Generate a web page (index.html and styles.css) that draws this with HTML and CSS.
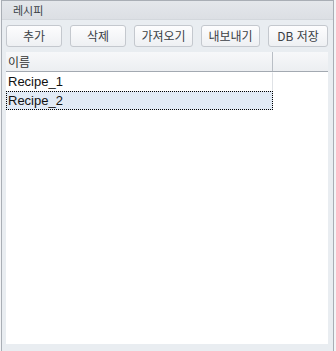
FILE: index.html
```html
<!DOCTYPE html>
<html lang="ko">
<head>
<meta charset="utf-8">
<link rel="stylesheet" href="styles.css">
</head>
<body>
<div class="panel">
  <div class="titlebar">레시피</div>
  <div class="toolbar">
    <button class="btn w56">추가</button>
    <button class="btn w56">삭제</button>
    <button class="btn w59">가져오기</button>
    <button class="btn w59">내보내기</button>
    <button class="btn w60">DB 저장</button>
  </div>
  <div class="list">
    <div class="header">
      <div class="col1">이름</div>
      <div class="col2"></div>
    </div>
    <div class="row"><span class="cell">Recipe_1</span></div>
    <div class="row selected"><span class="cell">Recipe_2</span></div>
  </div>
</div>
</body>
</html>
```

FILE: styles.css
```css
html, body {
  margin: 0;
  padding: 0;
  background: #f3f4f6;
  width: 336px;
  height: 351px;
  overflow: hidden;
}
.panel {
  margin-left: 1px;
  width: 331px;
  height: 351px;
  border: 1px solid #a9aeb5;
  border-bottom: none;
  background: #e9edf1;
  display: flex;
  flex-direction: column;
  font-family: "Noto Sans CJK KR", "Liberation Sans", sans-serif;
}
.titlebar {
  height: 18px;
  line-height: 18px;
  padding-left: 11px;
  font-size: 11px;
  color: #3a3f46;
  background: linear-gradient(#e4e7eb, #dcdfe4);
  border-bottom: 1px solid #d3d7dc;
}
.toolbar {
  display: flex;
  gap: 8px;
  padding: 5px 0 0 4px;
  height: 22px;
}
.btn {
  height: 22px;
  margin: 0;
  padding: 0;
  border: 1px solid #c4c8ce;
  border-radius: 3px;
  background: linear-gradient(#fdfdfe, #eef0f3);
  font-family: "Noto Sans CJK KR", "Liberation Sans", sans-serif;
  font-size: 12px;
  color: #3b3f45;
  line-height: 18px;
}
.w56 { width: 56px; }
.w59 { width: 59px; }
.w60 { width: 60px; }
.list {
  margin: 5px 0 0 4px;
  width: 322px;
  height: 292px;
  background: #ffffff;
}
.header {
  display: flex;
  height: 19px;
  border-bottom: 1px solid #a3a9b1;
  background: linear-gradient(#f7f8fa, #eceef1);
}
.col1 {
  width: 265px;
  border-right: 1px solid #b9bec5;
  font-size: 12px;
  line-height: 19px;
  padding-left: 2px;
  color: #333;
  box-sizing: border-box;
  width: 267px;
}
.col2 { flex: 1; }
.row {
  width: 267px;
  height: 19px;
  box-sizing: border-box;
  border: 1px solid transparent;
  display: flex;
  align-items: center;
  border-right: 1px solid #dfe2e6;
}
.row.selected {
  background: #e1eaf5;
  border: 1px dotted #000;
}
.cell {
  font-family: "Liberation Sans", sans-serif;
  font-size: 13px;
  color: #111;
  padding-left: 1px;
}
```
